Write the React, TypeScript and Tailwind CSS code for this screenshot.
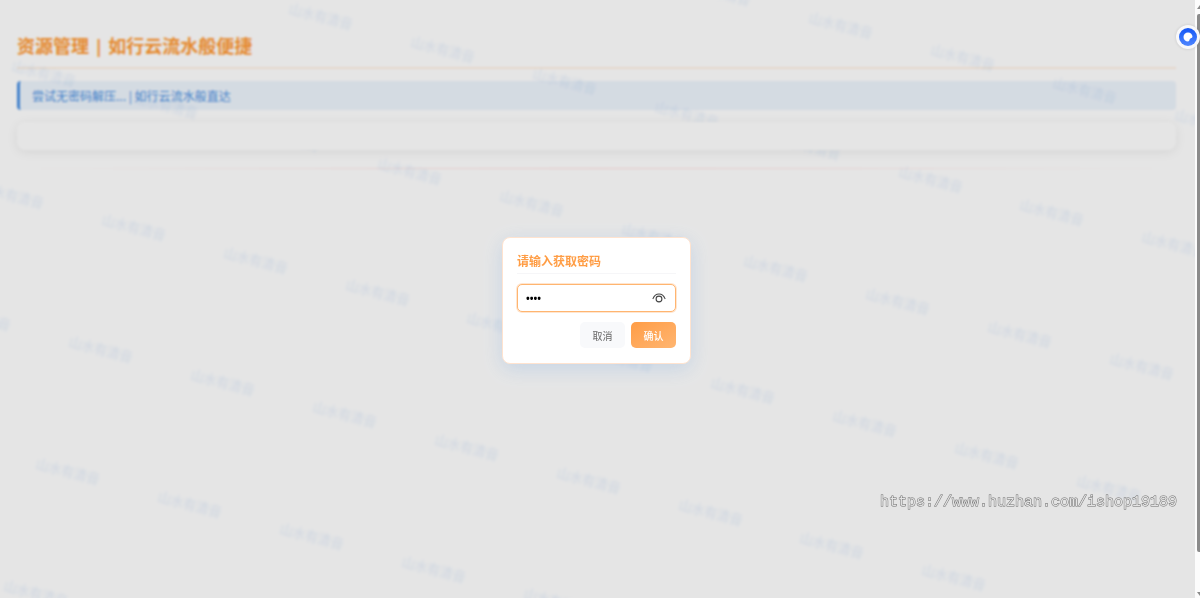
import { useState } from "react";

const STAMP = "山水有清音";

const stamps = Array.from({ length: 7 }, (_, row) => row - 1).flatMap((row) =>
  Array.from({ length: 13 }, (_, i) => i - 3).map((col) => ({
    key: `${row}:${col}`,
    x: Math.round(321 + col * 121.9 - row * 32.7),
    y: Math.round(16 + col * 32.6 + row * 121.9),
  }))
).filter((s) => s.x > -30 && s.x < 1210 && s.y > -10 && s.y < 610);

function Watermark() {
  return (
    <div aria-hidden="true" className="pointer-events-none absolute inset-0 overflow-hidden">
      {stamps.map((s) => (
        <span
          key={s.key}
          className="absolute -translate-x-1/2 -translate-y-1/2 rotate-[15deg] whitespace-nowrap text-[13px] leading-4 text-[#4a90e2]/14 blur-[1px]"
          style={{ left: s.x, top: s.y }}
        >
          {STAMP}
        </span>
      ))}
    </div>
  );
}

function EyeIcon() {
  return (
    <svg viewBox="0 0 14 10" className="h-[10px] w-[14px]" fill="none" stroke="#444" strokeWidth="1.1" strokeLinecap="round">
      <path d="M1 5.6C2.2 2.6 4.4 1 7 1s4.800 1.600 6 4.600" />
      <circle cx="7" cy="6" r="2.900" />
    </svg>
  );
}

function PasswordDialog() {
  const [value, setValue] = useState("1234");
  const [visible, setVisible] = useState(false);
  return (
    <form
      role="dialog"
      aria-labelledby="dialog-title"
      onSubmit={(e) => e.preventDefault()}
      className="flex w-[189px] flex-col rounded-lg border border-[#ffe3cf] bg-white px-[14px] pt-[14px] pb-[15px] shadow-[0_5px_20px_rgba(74,144,226,0.2)]"
    >
      <h2 id="dialog-title" className="border-b border-[#f6f6f8] pt-px pb-[2px] text-[12px] leading-[18px] font-bold text-[#ff9d45]">
        <label htmlFor="password">请输入获取密码</label>
      </h2>
      <div className="mt-[10px] flex h-7 items-center rounded-[5px] border border-[#ffb570] bg-white pr-[9px] pl-2 shadow-[0_0_0_1px_rgba(255,157,69,0.25)]">
        <input
          id="password"
          type={visible ? "text" : "password"}
          value={value}
          onChange={(e) => setValue(e.target.value)}
          className="min-w-0 flex-1 bg-transparent text-[10px] leading-4 font-bold text-black outline-none"
        />
        <button type="button" aria-label="显示密码" onClick={() => setVisible(!visible)}>
          <EyeIcon />
        </button>
      </div>
      <div className="mt-[10px] flex justify-end gap-[6px]">
        <button type="button" className="h-[26px] w-[45px] rounded-[5px] bg-[#f8f9fb] pt-[2px] text-[10px] text-[#666]">
          取消
        </button>
        <button type="submit" className="h-[26px] w-[45px] rounded-[5px] bg-linear-to-br from-[#ff9d45] to-[#ffb570] pt-[2px] text-[10px] font-medium text-white">
          确认
        </button>
      </div>
    </form>
  );
}

function Scrollbar() {
  return (
    <div aria-hidden="true" className="flex w-[5px] shrink-0 flex-col items-end bg-[#fcfcfc]">
      <svg viewBox="0 0 3 14" className="h-[14px] w-[3px]">
        <path d="M0 9 L3 5 V9 Z" fill="#8b8b8b" />
      </svg>
      <div className="w-[3px] grow rounded-l-[2px] bg-[#8b8b8b]" />
      <svg viewBox="0 0 3 46" className="h-[46px] w-[3px]">
        <path d="M0 40 H3 V44 Z" fill="#8b8b8b" />
      </svg>
    </div>
  );
}

export default function App() {
  return (
    <div className="relative flex min-h-screen overflow-hidden bg-white font-['Noto_Sans','Noto_Sans_CJK_SC',sans-serif]">
      <div className="relative min-w-0 flex-1 overflow-hidden">
        <Watermark />
        <main className="flex flex-col pt-8 pr-[19px] pl-[17px]">
          <h1 className="border-b-2 border-[#ff9d45]/15 pb-[7px] text-[18px] leading-7 font-bold text-[#ff9933]">
            资源管理 | 如行云流水般便捷
          </h1>
          <p className="mt-3 rounded-[4px] border-l-[3px] border-[#4a90e2] bg-[#4a90e2]/10 pt-[7px] pb-[6px] pl-3 font-['Noto_Sans_CJK_SC',sans-serif] text-[12px] leading-4 text-[#4a90e2]">
            尝试无密码解压... | 如行云流水般直达
          </p>
          <section className="relative mt-3 h-7 rounded-lg bg-white shadow-[0_2px_12px_rgba(0,0,0,0.07)]" />
          <div className="mt-[18px] h-px bg-linear-to-r from-transparent via-[#ff8080]/25 to-transparent" />
        </main>
        <div className="absolute inset-0 flex items-center justify-center bg-black/10 pt-[3px] pr-[2px] backdrop-blur-[1px]">
          <PasswordDialog />
        </div>
        <p className="absolute right-[18px] bottom-[83px] font-['Liberation_Mono',monospace] text-[15px] leading-6 text-[#e4e4e4] [-webkit-text-stroke:1px_#6c6c6c] [paint-order:stroke_fill]">
          https://www.huzhan.com/ishop19189
        </p>
      </div>
      <Scrollbar />
      <button
        type="button"
        aria-label="助手"
        className="absolute top-[25px] right-0 flex size-6 items-center justify-center rounded-full bg-[#f8f8fa] shadow-[0_0_3px_rgba(0,0,0,0.15)]"
      >
        <svg viewBox="0 0 18 18" className="size-[18px]">
          <defs>
            <linearGradient id="badge" x1="0" y1="0" x2="0" y2="1">
              <stop offset="0" stopColor="#1456f5" />
              <stop offset="1" stopColor="#4f86ff" />
            </linearGradient>
          </defs>
          <circle cx="9" cy="9" r="9" fill="url(#badge)" />
          <path d="M9 4.500A4.500 4.500 0 0 1 13.500 9Q13.200 10 11.800 10.200Q10.500 10.600 10.500 12Q10.300 13.300 9 13.500A4.500 4.500 0 1 1 9 4.500Z" fill="#fff" />
        </svg>
      </button>
    </div>
  );
}
